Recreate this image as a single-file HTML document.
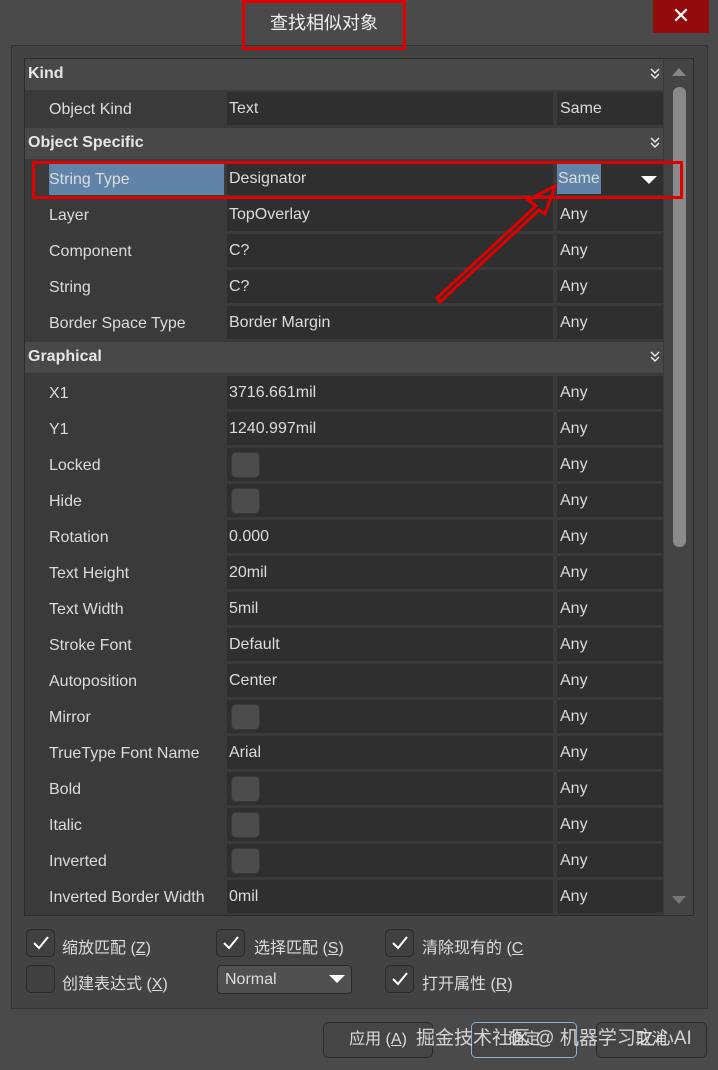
<!DOCTYPE html>
<html><head><meta charset="utf-8">
<style>
*{margin:0;padding:0;box-sizing:border-box}
body{width:718px;height:1070px;background:#4a4a4a;position:relative;overflow:hidden;font-family:"Liberation Sans","Noto Sans CJK SC",sans-serif;color:#dcdcdc;font-size:16px}
.a{position:absolute}
.hdr{position:absolute;left:25px;width:638px;height:31px;background:#484848;font-weight:bold;line-height:29px;padding-left:3px;font-size:16px;color:#e6e6e6}
.hdr svg{position:absolute;right:2px;top:9px}
.lab{position:absolute;left:49px;line-height:34px;white-space:nowrap;margin-top:2px}
.val{position:absolute;left:227px;width:326px;height:33px;background:#2f2f2f;line-height:33px;padding-left:2px;white-space:nowrap}
.any{position:absolute;left:557px;width:106px;height:33px;background:#2f2f2f;line-height:33px;padding-left:3px}
.cb{position:absolute;left:4px;top:4px;width:29px;height:26px;background:#4c4c4c;border-radius:5px;border:1px solid #3a3a3a}
.ck{position:absolute;width:29px;height:28px;border-radius:5px;background:#404040;border:1px solid #2a2a2a}
.ck svg{position:absolute;left:5px;top:5px}
.bt{position:absolute;top:1022px;height:36px;border:1px solid #2a2a2a;border-radius:5px;background:#454545;text-align:center;line-height:34px;font-size:16px}
</style></head><body>
<div class="a" style="left:653px;top:0;width:56px;height:33px;background:#930b0b;color:#fff;text-align:center;line-height:32px;font-size:22px">✕</div>
<!-- panel -->
<div class="a" style="left:11px;top:45px;width:697px;height:964px;background:#434343;border:1px solid #333"></div>
<div class="a" style="left:24px;top:58px;width:670px;height:858px;background:#3a3a3a;border:1px solid #2c2c2c"></div>
<!-- title -->
<div class="a" style="left:242px;top:0;width:164px;height:50px;border:3px solid #e00000"></div>
<div class="a" style="left:242px;top:9px;width:164px;text-align:center;font-size:18px;color:#eee">查找相似对象</div>
<!-- scrollbar -->
<div class="a" style="left:664px;top:59px;width:29px;height:856px;background:#444"></div>
<div class="a" style="left:672px;top:68px;width:0;height:0;border-left:7px solid transparent;border-right:7px solid transparent;border-bottom:8px solid #888"></div>
<div class="a" style="left:673px;top:87px;width:13px;height:460px;background:#8a8a8a;border-radius:6px"></div>
<div class="a" style="left:672px;top:896px;width:0;height:0;border-left:7px solid transparent;border-right:7px solid transparent;border-top:8px solid #777"></div>

<div class="hdr" style="top:59px">Kind<svg width="12" height="12"><path d="M2 1 L6 5 L10 1 M2 6 L6 10 L10 6" stroke="#eee" stroke-width="1.4" fill="none"/></svg></div>
<div class="lab" style="top:91px">Object Kind</div><div class="val" style="top:92px">Text</div><div class="any" style="top:92px">Same</div>

<div class="hdr" style="top:128px">Object Specific<svg width="12" height="12"><path d="M2 1 L6 5 L10 1 M2 6 L6 10 L10 6" stroke="#eee" stroke-width="1.4" fill="none"/></svg></div>
<div class="a" style="left:49px;top:162px;width:175px;height:33px;background:#5f84a8"></div>
<div class="lab" style="top:161px">String Type</div><div class="val" style="top:162px">Designator</div>
<div class="any" style="top:162px"><span style="background:#5f84a8;margin-left:-3px;padding:7px 1px">Same</span></div>
<div class="a" style="left:641px;top:176px;width:0;height:0;border-left:8px solid transparent;border-right:8px solid transparent;border-top:8px solid #fff"></div>
<div class="lab" style="top:197px">Layer</div><div class="val" style="top:198px">TopOverlay</div><div class="any" style="top:198px">Any</div>
<div class="lab" style="top:233px">Component</div><div class="val" style="top:234px">C?</div><div class="any" style="top:234px">Any</div>
<div class="lab" style="top:269px">String</div><div class="val" style="top:270px">C?</div><div class="any" style="top:270px">Any</div>
<div class="lab" style="top:305px">Border Space Type</div><div class="val" style="top:306px">Border Margin</div><div class="any" style="top:306px">Any</div>

<div class="hdr" style="top:342px">Graphical<svg width="12" height="12"><path d="M2 1 L6 5 L10 1 M2 6 L6 10 L10 6" stroke="#eee" stroke-width="1.4" fill="none"/></svg></div>
<div class="lab" style="top:375px">X1</div><div class="val" style="top:376px">3716.661mil</div><div class="any" style="top:376px">Any</div>
<div class="lab" style="top:411px">Y1</div><div class="val" style="top:412px">1240.997mil</div><div class="any" style="top:412px">Any</div>
<div class="lab" style="top:447px">Locked</div><div class="val" style="top:448px"><div class="cb"></div></div><div class="any" style="top:448px">Any</div>
<div class="lab" style="top:483px">Hide</div><div class="val" style="top:484px"><div class="cb"></div></div><div class="any" style="top:484px">Any</div>
<div class="lab" style="top:519px">Rotation</div><div class="val" style="top:520px">0.000</div><div class="any" style="top:520px">Any</div>
<div class="lab" style="top:555px">Text Height</div><div class="val" style="top:556px">20mil</div><div class="any" style="top:556px">Any</div>
<div class="lab" style="top:591px">Text Width</div><div class="val" style="top:592px">5mil</div><div class="any" style="top:592px">Any</div>
<div class="lab" style="top:627px">Stroke Font</div><div class="val" style="top:628px">Default</div><div class="any" style="top:628px">Any</div>
<div class="lab" style="top:663px">Autoposition</div><div class="val" style="top:664px">Center</div><div class="any" style="top:664px">Any</div>
<div class="lab" style="top:699px">Mirror</div><div class="val" style="top:700px"><div class="cb"></div></div><div class="any" style="top:700px">Any</div>
<div class="lab" style="top:735px">TrueType Font Name</div><div class="val" style="top:736px">Arial</div><div class="any" style="top:736px">Any</div>
<div class="lab" style="top:771px">Bold</div><div class="val" style="top:772px"><div class="cb"></div></div><div class="any" style="top:772px">Any</div>
<div class="lab" style="top:807px">Italic</div><div class="val" style="top:808px"><div class="cb"></div></div><div class="any" style="top:808px">Any</div>
<div class="lab" style="top:843px">Inverted</div><div class="val" style="top:844px"><div class="cb"></div></div><div class="any" style="top:844px">Any</div>
<div class="lab" style="top:879px">Inverted Border Width</div><div class="val" style="top:880px">0mil</div><div class="any" style="top:880px">Any</div>

<!-- red highlight + arrow -->
<div class="a" style="left:32px;top:161px;width:651px;height:38px;border:3px solid #e00000"></div>
<svg class="a" style="left:0;top:0" width="718" height="1070">
<path d="M437 298 L536 206 L528 200 L555 186 L545 214 L539 210 L440 302 Z" fill="none" stroke="#e00000" stroke-width="3" stroke-linejoin="miter"/>
</svg>

<!-- bottom options -->
<div class="ck" style="left:26px;top:929px"><svg width="18" height="16"><path d="M2 8 L7 13 L16 2" stroke="#fff" stroke-width="2" fill="none"/></svg></div>
<div class="a" style="left:62px;top:934px">缩放匹配 (<u>Z</u>)</div>
<div class="ck" style="left:216px;top:929px"><svg width="18" height="16"><path d="M2 8 L7 13 L16 2" stroke="#fff" stroke-width="2" fill="none"/></svg></div>
<div class="a" style="left:254px;top:934px">选择匹配 (<u>S</u>)</div>
<div class="ck" style="left:385px;top:929px"><svg width="18" height="16"><path d="M2 8 L7 13 L16 2" stroke="#fff" stroke-width="2" fill="none"/></svg></div>
<div class="a" style="left:422px;top:934px">清除现有的 (<u>C</u></div>
<div class="ck" style="left:26px;top:965px"></div>
<div class="a" style="left:62px;top:970px">创建表达式 (<u>X</u>)</div>
<div class="a" style="left:217px;top:965px;width:135px;height:29px;background:#505050;border:1px solid #2a2a2a;border-radius:4px;line-height:27px;padding-left:7px">Normal</div>
<div class="a" style="left:329px;top:975px;width:0;height:0;border-left:8px solid transparent;border-right:8px solid transparent;border-top:8px solid #fff"></div>
<div class="ck" style="left:385px;top:965px"><svg width="18" height="16"><path d="M2 8 L7 13 L16 2" stroke="#fff" stroke-width="2" fill="none"/></svg></div>
<div class="a" style="left:422px;top:970px">打开属性 (<u>R</u>)</div>

<!-- buttons -->
<div class="bt" style="left:323px;width:110px">应用 (<u>A</u>)</div>
<div class="bt" style="left:471px;width:106px;border-color:#8fb1cc">确定</div>
<div class="bt" style="left:596px;width:111px">取消</div>
<div class="a" style="left:416px;top:1023px;font-size:19px;color:rgba(235,235,235,0.85)">掘金技术社区 @ 机器学习之心AI</div>
</body></html>
